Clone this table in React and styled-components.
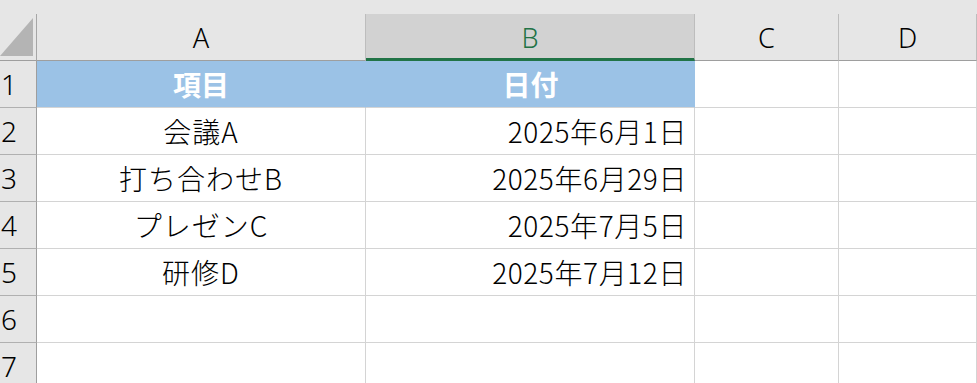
import React from "react";
import styled, { createGlobalStyle, css } from "styled-components";

const Global = createGlobalStyle`
  html, body { margin: 0; padding: 0; background: #ffffff; overflow: hidden; }
  body { font-family: "Noto Sans CJK JP", "Noto Sans", sans-serif; }
`;

const Sheet = styled.div`
  width: 977px;
  height: 383px;
  overflow: hidden;
  background: #ffffff;
`;

const TopStrip = styled.div`
  height: 14px;
  background: #e6e6e6;
`;

const Grid = styled.div`
  display: grid;
  grid-template-columns: 37px 329px 329px 144px 1fr;
  grid-auto-rows: 47px;
`;

const Corner = styled.div`
  position: relative;
  background: #e6e6e6;
  border-right: 1px solid #a6a6a6;
  border-bottom: 1px solid #9e9e9e;
  box-sizing: border-box;
  &::after {
    content: "";
    position: absolute;
    left: 0;
    top: 4px;
    width: 33px;
    height: 38px;
    background: #b4b4b4;
    clip-path: polygon(100% 0, 100% 100%, 0 100%);
  }
`;

const ColHead = styled.div`
  box-sizing: border-box;
  display: flex;
  align-items: center;
  justify-content: center;
  font-family: "Noto Sans", "Noto Sans CJK JP", sans-serif;
  font-size: 27px;
  font-weight: 300;
  color: #000000;
  background: #e6e6e6;
  border-right: 1px solid #bdbdbd;
  border-bottom: 1px solid #9e9e9e;
  ${(p) =>
    p.$active &&
    css`
      background: #d2d2d2;
      color: #217346;
      border-bottom: 3px solid #217346;
      padding-top: 2px;
    `}
`;

const RowHead = styled.div`
  box-sizing: border-box;
  display: flex;
  align-items: center;
  padding-left: 1px;
  font-family: "Noto Sans", "Noto Sans CJK JP", sans-serif;
  font-size: 28px;
  font-weight: 300;
  color: #000000;
  background: #e6e6e6;
  border-right: 1px solid #9e9e9e;
  border-bottom: 1px solid #b0b0b0;
`;

const Cell = styled.div`
  box-sizing: border-box;
  display: flex;
  align-items: center;
  justify-content: ${(p) =>
    p.$align === "right" ? "flex-end" : p.$align === "center" ? "center" : "flex-start"};
  padding: 0 8px;
  font-family: "Noto Sans CJK JP", sans-serif;
  font-size: 28px;
  font-weight: 300;
  letter-spacing: 1px;
  color: #000000;
  white-space: nowrap;
  border-right: 1px solid #d4d4d4;
  border-bottom: 1px solid #d4d4d4;
  ${(p) =>
    p.$date &&
    css`
      font-feature-settings: "palt";
      letter-spacing: 0.6px;
      padding-right: 7px;
    `}
  ${(p) =>
    p.$header &&
    css`
      background: #9bc2e6;
      color: #ffffff;
      font-weight: 700;
      letter-spacing: 0;
      font-feature-settings: normal;
      border-right-color: #9bc2e6;
      border-bottom-color: #d4d4d4;
    `}
`;

const columns = ["A", "B", "C", "D"];

const rows = [
  { item: "項目", date: "日付", header: true },
  { item: "会議A", date: "2025年6月1日" },
  { item: "打ち合わせB", date: "2025年6月29日" },
  { item: "プレゼンC", date: "2025年7月5日" },
  { item: "研修D", date: "2025年7月12日" },
  { item: "", date: "" },
  { item: "", date: "" },
];

export default function App() {
  return (
    <Sheet>
      <Global />
      <TopStrip />
      <Grid>
        <Corner />
        {columns.map((c) => (
          <ColHead key={c} $active={c === "B"}>
            {c}
          </ColHead>
        ))}
        {rows.map((r, i) => (
          <React.Fragment key={i}>
            <RowHead>{i + 1}</RowHead>
            <Cell $align="center" $header={r.header}>
              {r.item}
            </Cell>
            <Cell $align={r.header ? "center" : "right"} $header={r.header} $date>
              {r.date}
            </Cell>
            <Cell />
            <Cell />
          </React.Fragment>
        ))}
      </Grid>
    </Sheet>
  );
}
